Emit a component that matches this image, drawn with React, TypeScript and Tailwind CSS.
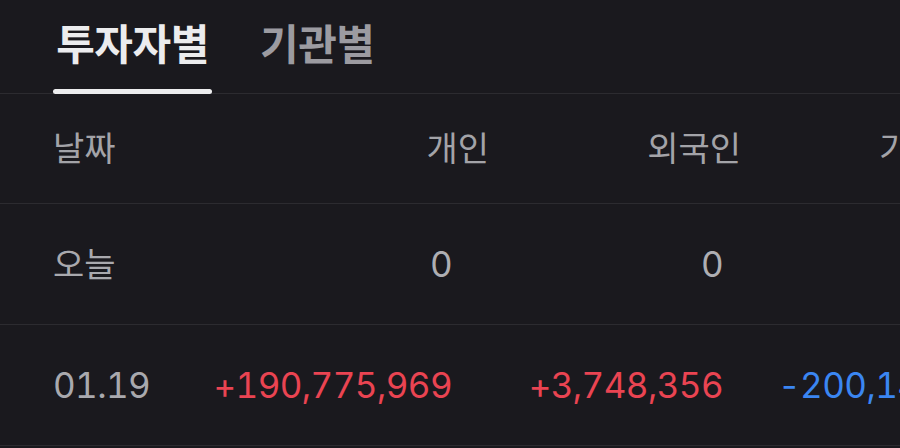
import React from "react";

const FONT = { fontFamily: '"Inter", "Noto Sans CJK KR", sans-serif' };

type Row = {
  date: string;
  personal: string;
  foreign: string;
  inst: string;
};

const rows: Row[] = [
  { date: "오늘", personal: "0", foreign: "0", inst: "" },
  { date: "01.19", personal: "+190,775,969", foreign: "+3,748,356", inst: "-200,147,223" },
];

function tone(v: string) {
  if (v.startsWith("+")) return "text-[#ea4452]";
  if (v.startsWith("-")) return "text-[#3b86f2]";
  return "text-[#aeaeb3]";
}

export default function App() {
  return (
    <div className="w-[900px] h-[448px] overflow-hidden bg-[#1a191e]" style={FONT}>
      {/* Tabs */}
      <div className="flex h-[94px] border-b border-[#2c2b30] pl-[53px]">
        <div className="relative flex w-[159px] shrink-0 items-center justify-center pb-[4px]">
          <span className="text-[42px] font-bold tracking-[-0.5px] text-[#ececee]">투자자별</span>
          <span className="absolute bottom-[-1px] left-0 right-0 h-[5px] rounded-full bg-[#ececee]" />
        </div>
        <div className="ml-[48px] flex shrink-0 items-center pb-[4px]">
          <span className="text-[42px] font-semibold tracking-[-0.5px] text-[#9c9ba1]">기관별</span>
        </div>
      </div>

      {/* Header */}
      <div className="flex h-[110px] items-center border-b border-[#2c2b30] pl-[53px] text-[34px] text-[#a3a3a8] whitespace-nowrap">
        <div className="w-[200px] shrink-0">날짜</div>
        <div className="w-[236px] shrink-0 text-right">개인</div>
        <div className="w-[252px] shrink-0 text-right">외국인</div>
        <div className="w-[200px] shrink-0 pl-[138px]">기관</div>
      </div>

      {/* Rows */}
      {rows.map((r) => (
        <div
          key={r.date}
          className="flex h-[121px] items-center border-b border-[#2c2b30] pl-[53px] text-[35px] tracking-[-0.6px] tabular-nums whitespace-nowrap"
        >
          <div className={`w-[150px] shrink-0 ${r.date === "오늘" ? "text-[34px] tracking-normal" : ""} text-[#a9a9ae]`}>{r.date}</div>
          <div className={`w-[249px] shrink-0 text-right ${tone(r.personal)}`}>{r.personal}</div>
          <div className={`w-[271px] shrink-0 text-right ${tone(r.foreign)}`}>{r.foreign}</div>
          <div className={`ml-[55px] shrink-0 ${tone(r.inst)}`}>{r.inst}</div>
        </div>
      ))}
    </div>
  );
}
